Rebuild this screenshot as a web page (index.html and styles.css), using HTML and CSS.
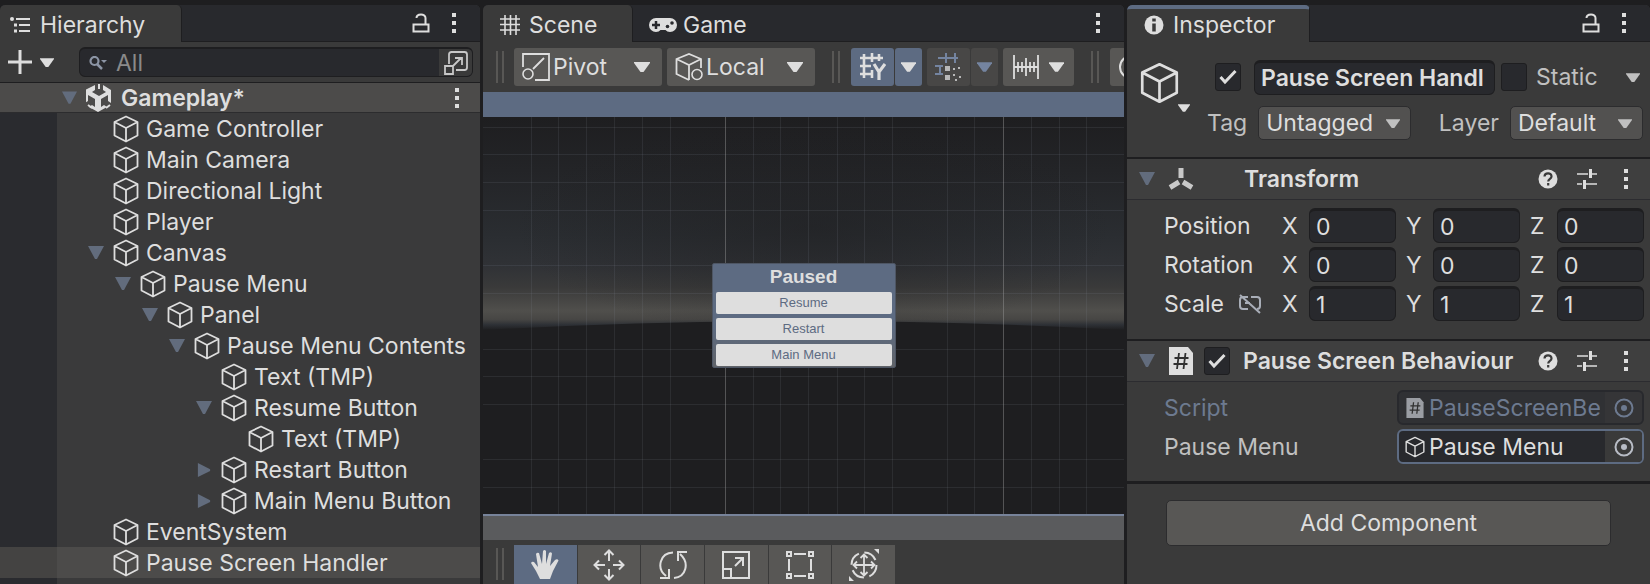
FILE: index.html
```html
<!DOCTYPE html>
<html lang="en">
<head>
<meta charset="utf-8">
<title>Gameplay</title>
<link rel="stylesheet" href="styles.css">
</head>
<body>
<svg class="sprite" aria-hidden="true">
  <symbol id="cube" viewBox="0 0 26 28"><path d="M13 1.5 24.5 7v13.5L13 26.500 1.500 20.500V7zM1.500 7 13 13 24.500 7M13 13v13.500" fill="none" stroke="currentColor" stroke-width="1.8" stroke-linejoin="round"/></symbol>
  <symbol id="down" viewBox="0 0 16 14"><path d="M0 0h16L9 13H7z" fill="currentColor"/></symbol>
  <symbol id="right" viewBox="0 0 14 16"><path d="M0 0v16l14-7V7z" fill="currentColor"/></symbol>
  <symbol id="drop" viewBox="0 0 16 10"><path d="M0 0h16v1L9.500 10h-3L0 1z" fill="currentColor"/></symbol>
  <symbol id="kebab" viewBox="0 0 6 20"><path d="M1 0h4v4H1zM1 8h4v4H1zM1 16h4v4H1z" fill="currentColor"/></symbol>
  <symbol id="lock" viewBox="0 0 18 20"><path d="M1.500 11.500h15v7h-15zM4.500 5C4.500.5 13.500.2 13.500 5v6" fill="none" stroke="currentColor" stroke-width="2"/></symbol>
  <symbol id="help" viewBox="0 0 20 20"><circle cx="10" cy="10" r="9.500" fill="currentColor"/><path d="M6.500 7.500c.3-4.500 7.200-4 7 0 0 2.500-3.300 2.300-3.300 5M10.200 14v2.500" fill="none" stroke="#3a3a3a" stroke-width="2.200"/></symbol>
  <symbol id="sliders" viewBox="0 0 20 20"><path d="M0 5h11M15 5h5M0 15h5M9 15h11" stroke="currentColor" stroke-width="1.600"/><path d="M13.500 0v9M7.500 11v9" stroke="currentColor" stroke-width="3"/></symbol>
  <symbol id="tick" viewBox="0 0 18 16"><path d="m1.500 8 4.500 5L16.500 2" fill="none" stroke="currentColor" stroke-width="3"/></symbol>
  <symbol id="script" viewBox="0 0 24 28"><path d="M0 0h19l5 6v22H0z" fill="currentColor"/><path d="M10 6 8 22M16.500 6l-2 16M5.500 11h14M4.500 17h14" stroke="#303030" stroke-width="1.800"/></symbol>
  <symbol id="target" viewBox="0 0 20 20"><circle cx="10" cy="10" r="8.500" fill="none" stroke="currentColor" stroke-width="2"/><circle cx="10" cy="10" r="3" fill="currentColor"/></symbol>
</svg>

<main class="editor">
  <section class="panel">
    <header class="tabs">
      <button class="tab tab-hier on"><svg width="21" height="18" viewBox="0 0 21 18"><circle cx="2" cy="3" r="2" fill="currentColor"/><path d="M6 3h14M9 9h11M9 15h11" stroke="currentColor" stroke-width="2"/><path d="M4 9h3M4 15h3" stroke="currentColor" stroke-width="3"/></svg>Hierarchy</button>
      <span class="tab-tools"><svg width="18" height="20"><use href="#lock"/></svg><svg width="6" height="20"><use href="#kebab"/></svg></span>
    </header>
    <div class="search-row">
      <button class="add" aria-label="Create"><svg width="24" height="24" viewBox="0 0 24 24"><path d="M12 0v24M0 12h24" stroke="currentColor" stroke-width="3"/></svg><svg width="14" height="9"><use href="#drop"/></svg></button>
      <div class="search">
        <svg width="18" height="14" viewBox="0 0 18 14"><circle cx="5.500" cy="5" r="4" fill="none" stroke="currentColor" stroke-width="2.200"/><path d="m8 8 5 5" stroke="currentColor" stroke-width="2.500"/><path d="M12 4h6l-3 3z" fill="currentColor"/></svg>
        <input type="text" placeholder="All" aria-label="Search">
        <button class="pick" aria-label="Open search"><svg width="24" height="24" viewBox="0 0 24 24"><path d="M5 13V3.500Q5 1 7.500 1h13Q23 1 23 3.500v13q0 2.500-2.500 2.500H12M1 15h8v8H1zM9 15l8-8M11 7h7v7" fill="none" stroke="currentColor" stroke-width="1.800"/></svg></button>
      </div>
    </div>
    <div class="scene-row"><svg class="dim" width="15" height="14"><use href="#down"/></svg><svg class="unity" width="26" height="28" viewBox="0 0 26 28"><path d="M9 1v5l-3 2 7 4 7-4-3-2V1l8 5v13l-3-2v-6l-7 4v8l3-2 3 2-9 5-9-5 3-2 3 2v-8l-7-4v6l-3 2V6z" fill="currentColor"/><path d="M13 0v5M2 21l4 3M24 21l-4 3" stroke="currentColor" stroke-width="2"/></svg><b>Gameplay*</b><svg class="end" width="6" height="20"><use href="#kebab"/></svg></div>
    <ul class="tree">
      <li class="d1"><i></i><svg><use href="#cube"/></svg>Game Controller</li>
      <li class="d1"><i></i><svg><use href="#cube"/></svg>Main Camera</li>
      <li class="d1"><i></i><svg><use href="#cube"/></svg>Directional Light</li>
      <li class="d1"><i></i><svg><use href="#cube"/></svg>Player</li>
      <li class="d1"><i><svg><use href="#down"/></svg></i><svg><use href="#cube"/></svg>Canvas</li>
      <li class="d2"><i><svg><use href="#down"/></svg></i><svg><use href="#cube"/></svg>Pause Menu</li>
      <li class="d3"><i><svg><use href="#down"/></svg></i><svg><use href="#cube"/></svg>Panel</li>
      <li class="d4"><i><svg><use href="#down"/></svg></i><svg><use href="#cube"/></svg>Pause Menu Contents</li>
      <li class="d5"><i></i><svg><use href="#cube"/></svg>Text (TMP)</li>
      <li class="d5"><i><svg><use href="#down"/></svg></i><svg><use href="#cube"/></svg>Resume Button</li>
      <li class="d6"><i></i><svg><use href="#cube"/></svg>Text (TMP)</li>
      <li class="d5"><i><svg><use href="#right"/></svg></i><svg><use href="#cube"/></svg>Restart Button</li>
      <li class="d5"><i><svg><use href="#right"/></svg></i><svg><use href="#cube"/></svg>Main Menu Button</li>
      <li class="d1"><i></i><svg><use href="#cube"/></svg>EventSystem</li>
      <li class="d1 selected"><i></i><svg><use href="#cube"/></svg>Pause Screen Handler</li>
    </ul>
  </section>

  <section class="panel">
    <header class="tabs">
      <button class="tab tab-scene on"><svg width="20" height="20" viewBox="0 0 20 20"><path d="M5 0v20M10.500 0v20M16 0v20M0 4h20M0 9.500h20M0 15h20" stroke="currentColor" stroke-width="1.600"/></svg>Scene</button>
      <button class="tab tab-game"><svg width="28" height="14" viewBox="0 0 28 14"><path d="M7 0h14a7 7 0 0 1 0 14q-3 0-4.500-2h-5Q10 14 7 14A7 7 0 0 1 7 0z" fill="currentColor"/><path d="M7 3v8M3 7h8" stroke="#28292d" stroke-width="2.500"/><circle cx="23" cy="5" r="1.800" fill="#28292d"/><circle cx="18.500" cy="8.500" r="1.800" fill="#28292d"/></svg>Game</button>
      <span class="tab-tools"><svg width="6" height="20"><use href="#kebab"/></svg></span>
    </header>
    <div class="toolbar">
      <span class="grip"></span>
      <button class="tool wide"><svg width="28" height="28" viewBox="0 0 28 28"><path d="M1 14V1h26v26H13M11 16 22 5" fill="none" stroke="currentColor" stroke-width="1.800"/><circle cx="6" cy="21" r="5" fill="none" stroke="currentColor" stroke-width="1.600"/></svg>Pivot<svg class="end" width="16" height="10"><use href="#drop"/></svg></button>
      <button class="tool wide"><svg width="28" height="28" viewBox="0 0 28 28"><path d="M14 27 1.500 21V6L14 1l12 5v9M1.500 6 14 12l12-6M14 12v15" fill="none" stroke="currentColor" stroke-width="1.800"/><circle cx="22" cy="21.500" r="5" fill="#585755" stroke="currentColor" stroke-width="1.600"/></svg>Local<svg class="end" width="16" height="10"><use href="#drop"/></svg></button>
      <span class="grip mid"></span>
      <span class="pair"><button class="tool blue icon" aria-label="Grid"><svg width="26" height="28" viewBox="0 0 26 28"><path d="M0 5h23M0 13h11M0 21h11M4 1v24M12 0v9M19 1v7M12 17v8" stroke="currentColor" stroke-width="2.600" fill="none"/><path d="m14 11 5 8 6-8M19 18v9" stroke="currentColor" stroke-width="3.200" fill="none"/></svg></button><button class="tool blue slim" aria-label="Grid options"><svg width="15" height="10"><use href="#drop"/></svg></button></span>
      <span class="pair"><button class="tool faded icon" aria-label="Snap"><svg width="28" height="28" viewBox="0 0 28 28"><path d="M3 5h20M5 12v10M0 13h8M0 21h8M11 0v10M20 0v10" stroke="#7484a0" stroke-width="2" fill="none"/><path d="M10 13h5v5h-5zM10 22h5v5h-5z" fill="#b8b8b8"/><path d="M18 16h2M23 15h2M18 22h2M24 24h2M20 27h2" stroke="#b8b8b8" stroke-width="2"/></svg></button><button class="tool faded slim" aria-label="Snap options"><svg width="15" height="10"><use href="#drop"/></svg></button></span>
      <button class="tool snap" aria-label="Increment"><svg width="26" height="26" viewBox="0 0 26 26"><path d="M1 1v24M25 1v24M1 13h24M5 8v10M9 8v10M13 4v18M17 8v10M21 8v10" stroke="currentColor" stroke-width="1.800"/></svg><svg width="15" height="10"><use href="#drop"/></svg></button>
      <span class="grip mid"></span>
      <button class="tool cut" aria-label="View options"><svg width="26" height="26" viewBox="0 0 26 26"><circle cx="13" cy="13" r="11" fill="none" stroke="currentColor" stroke-width="2"/></svg></button>
    </div>
    <div class="viewport">
      <div class="sky"></div>
      <div class="canvas">
        <svg class="backdrop" viewBox="0 0 641 397" preserveAspectRatio="none" aria-hidden="true">
          <defs>
            <linearGradient id="horizon" x1="0" y1="0" x2="0" y2="213" gradientUnits="userSpaceOnUse"><stop offset="0" stop-color="#1e1e20"/><stop offset=".25" stop-color="#232427"/><stop offset=".55" stop-color="#2a2d31"/><stop offset=".7" stop-color="#303236"/><stop offset=".8" stop-color="#3a3a3a"/><stop offset=".91" stop-color="#504f4c"/><stop offset=".95" stop-color="#474644"/><stop offset=".975" stop-color="#2e3136"/><stop offset="1" stop-color="#1e1e20"/></linearGradient>
            <radialGradient id="shade"><stop offset="0" stop-color="#1e1e20" stop-opacity=".5"/><stop offset="1" stop-color="#1e1e20" stop-opacity="0"/></radialGradient>
          </defs>
          <rect width="641" height="397" fill="#1e1e20"/>
          <path d="M0 0h641v213Q320 195 0 213z" fill="url(#horizon)"/>
          <ellipse cx="330" cy="110" rx="300" ry="110" fill="url(#shade)"/>
          <path d="M48.500 0v397M75.500 0v397M103.500 0v397M131.500 0v397M159.500 0v397M187.500 0v397M270.500 0v397M297.500 0v397M325.500 0v397M354.500 0v397M381.500 0v397M409.500 0v397M464.500 0v397M491.500 0v397M548.500 0v397M576.500 0v397M603.500 0v397M0 10.500h641M0 37.500h641M0 65.500h641M0 93.500h641M0 148.500h641M0 176.500h641M0 232.500h641M0 259.500h641M0 287.500h641M0 342.500h641M0 370.500h641" stroke="#8a93a0" stroke-opacity=".13" vector-effect="non-scaling-stroke"/>
          <path d="M242.500 0v397M520.500 0v397" stroke="#a0a0a0" stroke-opacity=".42" vector-effect="non-scaling-stroke"/>
        </svg>
        <div class="popup">
          <h2>Paused</h2>
          <button>Resume</button>
          <button>Restart</button>
          <button>Main Menu</button>
        </div>
      </div>
      <div class="ground"></div>
    </div>
    <div class="toolbar foot">
      <span class="grip"></span>
      <span class="modes">
      <button class="tool blue" aria-label="Hand"><svg width="28" height="30" viewBox="0 0 28 30"><path d="M9 29 5 21 0 13q1-2 3-1l4 5L5 4q1-2 3-1l3 11 1-13q1.500-2 3 0v13l3-11q2-1.500 3 .5L19 16l5-6q2.500-1.500 3.500.5L22 21l-3 8z" fill="#dedede"/></svg></button>
      <button class="tool" aria-label="Move"><svg width="32" height="32" viewBox="0 0 32 32"><path d="M16 12V2M11.500 6 16 1.500 20.500 6M16 20v10M11.500 26l4.500 4.500 4.500-4.500M12 16H2M6 11.500 1.500 16 6 20.500M20 16h10M26 11.500l4.500 4.500-4.500 4.500" fill="none" stroke="currentColor" stroke-width="2"/></svg></button>
      <button class="tool" aria-label="Rotate"><svg width="30" height="30" viewBox="0 0 30 30"><path d="M15 2.500C2 3-2 18 8 26M2 28h9v-9M16 28C28 27 32 13 22 4M29 2h-9v9" fill="none" stroke="currentColor" stroke-width="2"/></svg></button>
      <button class="tool" aria-label="Scale"><svg width="28" height="28" viewBox="0 0 28 28"><path d="M1 1h26v26H1zM1 18h8v9M13 15l8-8M13 7h8v8" fill="none" stroke="currentColor" stroke-width="2"/></svg></button>
      <button class="tool" aria-label="Rect"><svg width="28" height="28" viewBox="0 0 28 28"><path d="M1 1h4v4H1zM23 1h4v4h-4zM1 23h4v4H1zM23 23h4v4h-4zM8 3h12M8 25h12M3 8v12M25 8v12" fill="none" stroke="currentColor" stroke-width="2"/></svg></button>
      <button class="tool" aria-label="Transform"><svg width="32" height="32" viewBox="0 0 32 32"><circle cx="16" cy="16" r="12.500" fill="none" stroke="currentColor" stroke-width="2" stroke-dasharray="14 5.630"/><path d="M16 6v20M6 16h20M12.500 9 16 5.500 19.500 9M12.500 23l3.500 3.500 3.500-3.500M9 12.500 5.500 16 9 19.500M23 12.500l3.500 3.500-3.500 3.500" fill="none" stroke="currentColor" stroke-width="1.800"/><path d="M26 0h5v5zM1 27v5h5z" fill="currentColor"/></svg></button>
      </span>
    </div>
  </section>

  <section class="panel">
    <header class="tabs">
      <button class="tab tab-insp on"><svg width="20" height="20" viewBox="0 0 20 20"><circle cx="10" cy="10" r="9.500" fill="currentColor"/><path d="M10 3.500v3M10 8.500v8" stroke="#3a3a3a" stroke-width="3.500"/></svg>Inspector</button>
      <span class="tab-tools"><svg width="18" height="20"><use href="#lock"/></svg><svg width="6" height="20"><use href="#kebab"/></svg></span>
    </header>
    <div class="object">
      <div class="object-icon"><svg width="39" height="42"><use href="#cube"/></svg><svg class="mini" width="12" height="8"><use href="#drop"/></svg></div>
      <div class="line">
        <label class="check"><input type="checkbox" checked aria-label="Active"><svg width="18" height="16"><use href="#tick"/></svg></label>
        <input class="field name" type="text" value="Pause Screen Handl" aria-label="Name">
        <label class="check"><input type="checkbox" id="static"><svg width="18" height="16"><use href="#tick"/></svg></label>
        <label class="muted static" for="static">Static</label>
        <svg class="muted" width="14" height="9"><use href="#drop"/></svg>
      </div>
      <div class="line second">
        <label class="muted" for="tag">Tag</label>
        <span class="drop tag"><select id="tag"><option>Untagged</option></select><svg width="14" height="9"><use href="#drop"/></svg></span>
        <label class="muted end" for="layer">Layer</label>
        <span class="drop layer"><select id="layer"><option>Default</option></select><svg width="14" height="9"><use href="#drop"/></svg></span>
      </div>
    </div>
    <div class="comp-head"><svg class="dim" width="16" height="14"><use href="#down"/></svg><svg class="comp-icon" width="26" height="24" viewBox="0 0 26 24"><path d="M13 1v10M11 15l-9 5.500M15 15l9 5.500" stroke="#c8c8c8" stroke-width="5"/></svg><span class="slot"></span><b>Transform</b><span class="comp-tools"><svg width="20" height="20"><use href="#help"/></svg><svg width="20" height="20"><use href="#sliders"/></svg><svg width="6" height="20"><use href="#kebab"/></svg></span></div>
    <div class="rows">
      <div class="vec"><span>Position</span><label for="px">X</label><input class="field" id="px" value="0"><label for="py">Y</label><input class="field" id="py" value="0"><label for="pz">Z</label><input class="field" id="pz" value="0"></div>
      <div class="vec"><span>Rotation</span><label for="rx">X</label><input class="field" id="rx" value="0"><label for="ry">Y</label><input class="field" id="ry" value="0"><label for="rz">Z</label><input class="field" id="rz" value="0"></div>
      <div class="vec"><span class="scale">Scale<svg width="24" height="20" viewBox="0 0 24 20"><path d="M10 3H5Q2 3 2 6v6q0 3 3 3h5M13 3h6q3 0 3 3v6q0 3-3 3M7 9h5M2 1l20 18" fill="none" stroke="#a9aeb8" stroke-width="2"/></svg></span><label for="sx">X</label><input class="field" id="sx" value="1"><label for="sy">Y</label><input class="field" id="sy" value="1"><label for="sz">Z</label><input class="field" id="sz" value="1"></div>
    </div>
    <div class="comp-head"><svg class="dim" width="16" height="14"><use href="#down"/></svg><svg class="comp-icon doc" width="24" height="28"><use href="#script"/></svg><label class="check"><input type="checkbox" checked aria-label="Enabled"><svg width="18" height="16"><use href="#tick"/></svg></label><b>Pause Screen Behaviour</b><span class="comp-tools"><svg width="20" height="20"><use href="#help"/></svg><svg width="20" height="20"><use href="#sliders"/></svg><svg width="6" height="20"><use href="#kebab"/></svg></span></div>
    <div class="rows refs">
      <div class="ref off"><label for="scr">Script</label><span class="obj"><svg width="18" height="20"><use href="#script"/></svg><input id="scr" value="PauseScreenBe" disabled><button disabled aria-label="Select script"><svg width="20" height="20"><use href="#target"/></svg></button></span></div>
      <div class="ref"><label class="muted" for="pm">Pause Menu</label><span class="obj focus"><svg width="20" height="22"><use href="#cube"/></svg><input id="pm" value="Pause Menu"><button aria-label="Select object"><svg width="20" height="20"><use href="#target"/></svg></button></span></div>
    </div>
    <div class="add-area"><button class="add-comp">Add Component</button></div>
  </section>
</main>
</body>
</html>
```
FILE: styles.css
```css
* { box-sizing: border-box; }
body { margin: 0; background: #1e1e20; color: #dedede; font-family: Inter, "Liberation Sans", sans-serif; font-size: 23px; line-height: 30px; }
button, input, select { font: inherit; color: inherit; background: none; border: 0; padding: 0; margin: 0; min-width: 0; outline: none; }
svg { flex: none; display: block; }
b { font-weight: 600; }
.sprite { position: absolute; width: 0; height: 0; }
.end { margin-left: auto; }
.dim { color: #626c7d; }
.muted { color: #c0c0c0; }

.editor { display: grid; grid-template-columns: 480px minmax(0, 1fr) 523px; gap: 3px; height: 100vh; padding-top: 5px; overflow: hidden; }
.panel { display: flex; flex-direction: column; min-width: 0; min-height: 0; overflow: hidden; background: #3a3a3a; border-radius: 5px 5px 0 0; }

.tabs { display: flex; flex: none; height: 37px; background: #28292d; border-bottom: 1px solid #1e1e20; }
.tab { display: flex; align-items: center; height: 37px; padding-top: 2px; white-space: nowrap; }
.tab.on { background: #3a3a3a; border-right: 1px solid #1e1e20; border-radius: 5px 5px 0 0; }
.tab-hier { width: 182px; padding-left: 10px; gap: 9px; }
.tab-scene { width: 150px; padding-left: 17px; gap: 9px; }
.tab-game { padding-left: 16px; gap: 6px; }
.tab.tab-insp { width: 183px; padding: 0 0 2px 17px; gap: 9px; border-top: 4px solid #5d6b82; }
.tab-tools { display: flex; align-items: center; gap: 21px; margin-left: auto; padding-right: 23px; }

.search-row { display: flex; align-items: center; flex: none; height: 41px; padding: 0 7px 0 8px; border-bottom: 1px solid #1e1e20; }
.add { display: flex; align-items: center; gap: 8px; width: 71px; }
.search { display: flex; align-items: center; flex: 1; height: 30px; padding-left: 9px; gap: 9px; color: #8c95a5; background: #28292d; border: 1px solid #1e1e20; border-top-width: 2px; border-radius: 6px; overflow: hidden; }
.search input { flex: 1; }
.search input::placeholder { color: #8a8a8a; opacity: 1; }
.pick { display: grid; place-items: center; width: 33px; height: 30px; color: #c8c8c8; background: #3a3a3a; }

.scene-row { display: flex; align-items: center; flex: none; height: 30px; padding: 0 20px 0 62px; background: #4c4b4a; border-bottom: 1px solid #2c2c2e; }
.unity { margin: 0 9px; }
.tree { flex: 1; margin: 0; padding: 0; list-style: none; background: linear-gradient(90deg, #2a2b2f 57px, #3a3a3b 57px); }
.tree li { display: flex; align-items: center; height: 31px; white-space: nowrap; }
.tree li > svg { width: 26px; height: 28px; margin-right: 7px; }
.tree i { flex: none; width: 25px; color: #626c7d; }
.tree i svg { width: 16px; height: 14px; }
.tree .selected { background: linear-gradient(90deg, #444342 57px, #4c4b4a 57px); }
.d1 { padding-left: 88px; }
.d2 { padding-left: 115px; }
.d3 { padding-left: 142px; }
.d4 { padding-left: 169px; }
.d5 { padding-left: 196px; }
.d6 { padding-left: 223px; }

.toolbar { display: flex; align-items: center; flex: none; height: 50px; padding-left: 13px; gap: 5px; overflow: hidden; }
.grip { flex: none; width: 8px; height: 32px; margin-right: 5px; border: solid #585755; border-width: 0 2px; }
.grip.mid { margin: 0 6px 0 12px; }
.tool { display: flex; flex: none; align-items: center; justify-content: center; height: 38px; background: #585755; border-radius: 3px; }
.wide { width: 148px; justify-content: flex-start; padding: 0 12px 0 8px; gap: 3px; }
.pair { display: flex; flex: none; gap: 1px; }
.icon { width: 43px; }
.slim { width: 27px; }
.blue { background: #5d6b82; }
.faded { background: #484746; color: #7484a0; }
.snap { width: 71px; gap: 10px; }
.cut { width: 64px; justify-content: flex-start; padding-left: 8px; }

.viewport { display: flex; flex: 1; flex-direction: column; min-height: 0; }
.sky { height: 25px; background: #5d6b82; }
.canvas { position: relative; display: grid; flex: 1; place-items: center; min-height: 0; }
.backdrop { position: absolute; inset: 0; width: 100%; height: 100%; }
.ground { height: 26px; background: #5a5b5d; border-top: 2px solid #77839a; }
.popup { position: relative; display: flex; flex-direction: column; gap: 4px; width: 184px; padding: 0 3px 1px; font-family: "Liberation Sans", Arial, sans-serif; background: linear-gradient(#5d6b82 60%, #606368); border: 1px solid #4e5664; border-radius: 2px; }
.popup h2 { margin: 0; font-size: 19px; line-height: 23px; padding-top: 1px; text-align: center; }
.popup button { height: 22px; color: #5d6b82; font-size: 13px; line-height: 22px; background: #dedede; border-radius: 2px; }

.foot { align-items: flex-start; height: 44px; padding-top: 5px; }
.foot .grip { margin-top: 3px; }
.modes { display: flex; flex: none; gap: 1px; width: 381px; }
.modes .tool { flex: 1; height: 39px; border-radius: 0; }

.object { display: grid; grid-template-columns: 75px minmax(0, 1fr); align-content: start; flex: none; height: 115px; padding: 16px 7px 0 13px; }
.object-icon { grid-row: 1 / 3; padding-top: 4px; }
.mini { margin-left: 38px; }
.line { display: flex; align-items: center; height: 38px; }
.second { margin-top: 8px; }
.check { display: grid; flex: none; place-items: center; width: 26px; height: 28px; background: #28292d; border: 1px solid #1e1e20; border-radius: 3px; }
.check input { grid-area: 1 / 1; appearance: none; width: 24px; height: 26px; }
.check svg { grid-area: 1 / 1; visibility: hidden; pointer-events: none; }
.check input:checked + svg { visibility: visible; }
.field { width: 100%; height: 35px; padding-left: 6px; background: #28292d; border: 1px solid #1e1e20; border-top-width: 3px; border-radius: 6px; }
.name { flex: 1; margin: 0 6px 0 13px; font-weight: 600; }
.static { width: 99px; padding-left: 9px; }
.line > svg { margin-right: 3px; }
.second .muted { margin-right: 11px; }
.second > .muted:first-child { margin-left: -8px; }
.drop { display: grid; align-items: center; }
.drop select { grid-area: 1 / 1; appearance: none; height: 34px; padding-left: 7px; background: #525150; border: 1px solid #2c2c2e; border-radius: 5px; }
.drop svg { grid-area: 1 / 1; justify-self: end; margin-right: 11px; color: #c0c0c0; pointer-events: none; }
.tag { width: 153px; }
.layer { width: 133px; }

.comp-head { display: flex; flex: none; align-items: center; height: 43px; padding: 0 21px 0 12px; background: #3f3f3f; border-top: 2px solid #1e1e20; border-bottom: 1px solid #2c2c30; white-space: nowrap; }
.comp-icon { margin: 0 11px 0 13px; }
.comp-icon.doc { margin-left: 14px; }
.slot { width: 26px; }
.comp-head b { margin-left: 13px; }
.comp-tools { display: flex; margin-left: auto; gap: 19px; }
.comp-tools svg:last-child { margin-left: 7px; }
.rows { display: grid; flex: none; gap: 4px; padding: 8px 6px 18px 37px; }
.vec { display: grid; grid-template-columns: 118px 27px 1fr 37px 1fr 37px 1fr; align-items: center; }
.vec label:nth-of-type(n+2) { padding-left: 10px; }
.scale { display: flex; align-items: center; gap: 14px; }
.refs { padding-bottom: 17px; }
.ref { display: grid; grid-template-columns: minmax(0, 1fr) 247px; align-items: center; }
.off { color: #6d7a90; }
.obj { display: flex; align-items: center; height: 35px; padding-left: 7px; gap: 5px; background: #303134; border: 2px solid #28292d; border-radius: 6px; overflow: hidden; }
.obj input { flex: 1; }
.obj button { display: grid; place-items: center; width: 37px; height: 35px; background: #353537; }
.obj.focus { padding-left: 6px; background: #28292d; border-color: #5d6b82; gap: 4px; }
.focus button { color: #b8bcc5; background: #3a3a3a; }
.off .obj > svg { color: #9a9da3; }
.add-area { flex: 1; padding: 16px 39px; border-top: 3px solid #1e1e20; }
.add-comp { display: block; width: 100%; height: 46px; background: #585755; border: 1px solid #2c2c2e; border-radius: 5px; }
```
